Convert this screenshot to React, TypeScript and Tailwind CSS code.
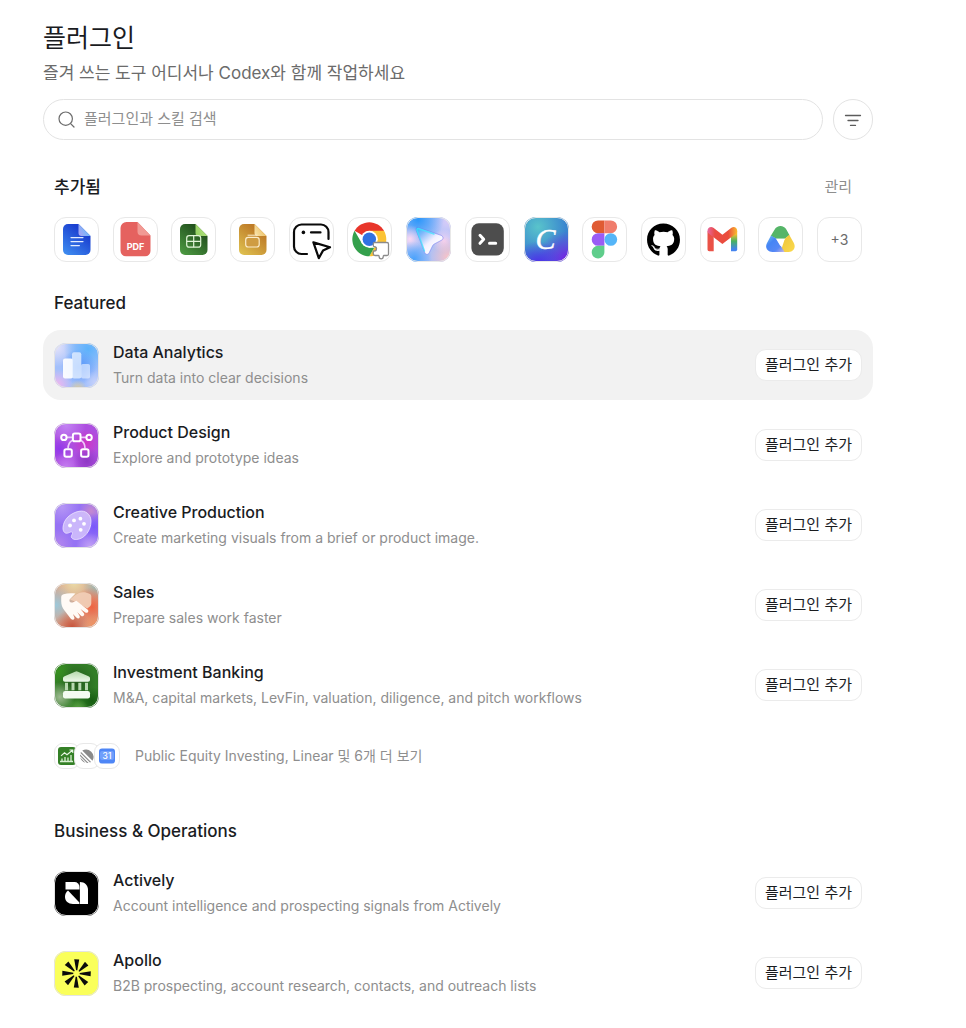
import type { ReactNode } from "react"
import { FaGithub } from "react-icons/fa"

type Blob = { x: number; y: number; r: number; color: string }

type Plugin = {
  name: string
  description: string
  icon: ReactNode
  active?: boolean
}

// Soft multi-colour background shared by the gradient app icons
function Glow({ id, base, blobs }: { id: string; base: string; blobs: Blob[] }) {
  return (
    <>
      <defs>
        {blobs.map((blob, i) => (
          <radialGradient key={i} id={`${id}-${i}`}>
            <stop offset="0" stopColor={blob.color} />
            <stop offset="1" stopColor={blob.color} stopOpacity="0" />
          </radialGradient>
        ))}
      </defs>
      <rect width="45" height="45" fill={base} />
      {blobs.map((blob, i) => (
        <circle key={i} cx={blob.x} cy={blob.y} r={blob.r} fill={`url(#${id}-${i})`} />
      ))}
    </>
  )
}

function Svg({ children }: { children: ReactNode }) {
  return (
    <svg viewBox="0 0 45 45" className="size-full" aria-hidden="true">
      {children}
    </svg>
  )
}

function FileShape({ id, from, to, foldFrom, foldTo }: Record<"id" | "from" | "to" | "foldFrom" | "foldTo", string>) {
  return (
    <>
      <defs>
        <linearGradient id={`${id}-body`} x1="0.8" y1="0" x2="0.1" y2="1">
          <stop offset="0.2" stopColor={from} />
          <stop offset="1" stopColor={to} />
        </linearGradient>
        <linearGradient id={`${id}-fold`} x1="1" y1="0.3" x2="0" y2="0.8">
          <stop offset="0" stopColor={foldFrom} />
          <stop offset="1" stopColor={foldTo} />
        </linearGradient>
      </defs>
      <path d="M14 7H24.5L36.5 19V33a5 5 0 0 1-5 5H14a5 5 0 0 1-5-5V12a5 5 0 0 1 5-5Z" fill={`url(#${id}-body)`} />
      <path d="M24.5 7 36.5 19H27.5a3 3 0 0 1-3-3Z" fill={`url(#${id}-fold)`} />
    </>
  )
}

const DocsIcon = () => (
  <Svg>
    <FileShape id="docs" from="#1a3fd0" to="#3f8df0" foldFrom="#5cc0f8" foldTo="#a7a4f5" />
    <path d="M17 20.6h12M17 24.6h12M17 28.6h8.4" stroke="#e3edff" strokeWidth="1.2" strokeLinecap="round" />
  </Svg>
)

const PdfIcon = () => (
  <Svg>
    <path d="M13.5 5H24.5L37.5 18.5V34a5.3 5.3 0 0 1-5.3 5.3H13a5.5 5.5 0 0 1-5.5-5.5V11a6 6 0 0 1 6-6Z" fill="#e5625f" />
    <path d="M24.5 5 37.5 18.5H28.5a4 4 0 0 1-4-4Z" fill="#f19a94" />
    <text x="22.5" y="33" fontSize="9" fontWeight="700" fill="#fff" textAnchor="middle">
      PDF
    </text>
  </Svg>
)

const SheetsIcon = () => (
  <Svg>
    <FileShape id="sheets" from="#24541f" to="#4d9a42" foldFrom="#b9e883" foldTo="#93cf62" />
    <rect x="15.7" y="18.7" width="14" height="11.5" rx="2.5" fill="none" stroke="#e2f5d9" strokeWidth="1.2" />
    <path d="M22.7 18.7v11.5M15.7 24.4h14" stroke="#e2f5d9" strokeWidth="1.2" />
  </Svg>
)

const SlidesIcon = () => (
  <Svg>
    <FileShape id="slides" from="#be7c28" to="#dfc150" foldFrom="#e9b956" foldTo="#f8e2a8" />
    <rect x="15.7" y="20.4" width="13.5" height="9.6" rx="2.5" fill="#cf9c42" stroke="#fbeccb" strokeWidth="1.2" />
    <path d="M18 18.2h9" stroke="#fbeccb" strokeWidth="1" strokeLinecap="round" />
  </Svg>
)

const ComputerIcon = () => (
  <Svg>
    <g fill="none" stroke="#0a0a0a" strokeWidth="2.2" strokeLinecap="round" strokeLinejoin="round">
      <path d="M39.5 22v-7A7.5 7.5 0 0 0 32 7.500H12.500A7.500 7.500 0 0 0 5 15v14.500a7.500 7.500 0 0 0 7.500 7.500H18" />
      <path d="M22 15.4h9.5" />
      <path d="M24.4 25.4 41 30.300l-7 3.300-4.200 7.500Z" />
    </g>
    <circle cx="14.4" cy="15.4" r="1.8" fill="#0a0a0a" />
  </Svg>
)

const ChromeIcon = () => (
  <Svg>
    <path d="M22.3 22.3 7.578 13.8A17 17 0 0 1 37.022 13.8Z" fill="#e8352a" />
    <path d="M22.3 13.8H37.022A17 17 0 0 1 22.3 39.3L29.661 26.55Z" fill="#fbc334" />
    <path d="M7.578 13.8 14.939 26.55 22.3 30.8H27.209L22.3 39.3A17 17 0 0 1 7.578 13.8Z" fill="#34a04c" />
    <circle cx="22.3" cy="22.3" r="8.5" fill="#fff" />
    <circle cx="22.3" cy="22.3" r="6.7" fill="#3071e2" />
    <path
      d="M28 25.5h12a1.500 1.500 0 0 1 1.500 1.500v10a1.500 1.500 0 0 1-1.500 1.500h-3c-.7 0-.8.5-.8 1.300a2 2 0 0 1-4 0c0-.8-.2-1.300-.9-1.300H28a1.700 1.700 0 0 1-1.700-1.700v-2c0-.6.4-.8 1-.8a2.200 2.200 0 0 0 0-4.400c-.6 0-1-.2-1-.8V27a1.500 1.500 0 0 1 1.700-1.500Z"
      fill="#fff"
      stroke="#8b8b8b"
      strokeWidth="1.300"
    />
  </Svg>
)

const BrowserIcon = () => (
  <Svg>
    <Glow
      id="browser"
      base="#a9c0f8"
      blobs={[
        { x: 42, y: 4, r: 20, color: "#d9ccf8" },
        { x: 12, y: 2, r: 26, color: "#2a96fa" },
        { x: 4, y: 22, r: 14, color: "#fbd9f3" },
        { x: 8, y: 42, r: 18, color: "#4aa2fb" },
        { x: 38, y: 24, r: 12, color: "#f5d3f3" },
        { x: 42, y: 40, r: 20, color: "#f8c3c8" },
      ]}
    />
    <defs>
      <linearGradient id="browser-arrow" x1="0" y1="0" x2="0.7" y2="0.8">
        <stop offset="0" stopColor="#1fb9fb" />
        <stop offset="0.3" stopColor="#7fb8fb" />
        <stop offset="0.7" stopColor="#f3f0ff" />
        <stop offset="1" stopColor="#fff" />
      </linearGradient>
    </defs>
    <path
      d="M12.500 10.500 35 18.300c2.600 1 2.700 3.800.4 5L28.300 27c-.8.4-1.300 1-1.700 1.800l-3.400 7c-1.200 2.200-3.800 2-4.600-.5L10.200 13.500c-.7-2.200.4-3.700 2.300-3Z"
      fill="url(#browser-arrow)"
      stroke="#7278ee"
      strokeOpacity="0.600"
      strokeWidth="0.900"
    />
    <path d="M18.500 34 11 13.500c-.4-1.500.2-2.300 1.500-2L28 17" fill="none" stroke="#3fe3fd" strokeWidth="1.400" strokeLinecap="round" opacity="0.750" />
  </Svg>
)

const TerminalIcon = () => (
  <Svg>
    <rect x="6.4" y="6.2" width="32.4" height="32.4" rx="7.5" fill="#4d4d4d" />
    <path d="m15 18.3 3.700 4-3.700 4M24.500 26.300h6.200" fill="none" stroke="#fff" strokeWidth="3" strokeLinecap="round" strokeLinejoin="round" />
  </Svg>
)

const CanvaIcon = () => (
  <Svg>
    <Glow
      id="canva"
      base="#3a86cf"
      blobs={[
        { x: 14, y: 10, r: 28, color: "#59c4cb" },
        { x: 42, y: 42, r: 28, color: "#7423e3" },
        { x: 14, y: 48, r: 24, color: "#5126ec" },
      ]}
    />
    <text x="21.5" y="32" fontSize="30" fontStyle="italic" fill="#fff" stroke="#fff" strokeWidth="0.4" textAnchor="middle" fontFamily="Liberation Serif, serif">
      C
    </text>
  </Svg>
)

const FigmaIcon = () => (
  <Svg>
    <path d="M22.4 3.5V16.200H16a6.350 6.350 0 0 1 0-12.700Z" fill="#e05b33" />
    <path d="M22.4 3.5h6.400a6.350 6.350 0 0 1 0 12.700h-6.400Z" fill="#f07d6c" />
    <path d="M22.4 16.2v12.600H16a6.300 6.300 0 0 1 0-12.600Z" fill="#9a5cf5" />
    <circle cx="28.8" cy="22.5" r="6.35" fill="#55b5f8" />
    <path d="M22.4 28.8v6.300A6.350 6.350 0 1 1 16 28.800Z" fill="#5fcd8b" />
  </Svg>
)

const GithubIcon = () => <FaGithub className="m-auto h-[34px] w-[33px] text-black" aria-hidden="true" />

const GmailIcon = () => (
  <Svg>
    <defs>
      <linearGradient id="gmail-right" x1="0" y1="0" x2="0" y2="1">
        <stop offset="0.15" stopColor="#f9bd2c" />
        <stop offset="0.5" stopColor="#49b35e" />
        <stop offset="0.9" stopColor="#4484ee" />
      </linearGradient>
      <linearGradient id="gmail-v" x1="0" y1="0" x2="1" y2="0">
        <stop offset="0" stopColor="#e668a2" />
        <stop offset="0.25" stopColor="#ea4c43" />
        <stop offset="0.7" stopColor="#ea4c3c" />
        <stop offset="1" stopColor="#fabd2d" />
      </linearGradient>
    </defs>
    <path d="M31 19 37.200 14V32.500a1.700 1.700 0 0 1-1.700 1.700H31Z" fill="url(#gmail-right)" />
    <path d="M7.500 14 13.700 19V34.200H9.200a1.700 1.700 0 0 1-1.700-1.700Z" fill="#ea5247" />
    <path d="M7.500 13.800c0-3.200 3.400-4.900 5.900-3l9 6.900 9-6.900c2.500-1.900 5.800-.2 5.800 3 0 1.300-.5 2.300-1.500 3L22.400 27 9 16.800c-1-.8-1.500-1.800-1.500-3Z" fill="url(#gmail-v)" />
  </Svg>
)

const DriveIcon = () => (
  <Svg>
    <defs>
      <linearGradient id="drive-blue" x1="0" y1="0" x2="1" y2="1">
        <stop offset="0" stopColor="#77c5ee" />
        <stop offset="0.35" stopColor="#4585f5" />
        <stop offset="0.7" stopColor="#5588f6" />
        <stop offset="1" stopColor="#c9b6e6" />
      </linearGradient>
      <linearGradient id="drive-yellow" x1="0" y1="0" x2="1" y2="1">
        <stop offset="0" stopColor="#ecc23b" />
        <stop offset="1" stopColor="#fbda4c" />
      </linearGradient>
    </defs>
    <path d="M16.500 12.800c2.700-5 9.300-5 12 0l3 5.500-4.800 3.500H18.500L12.700 19Z" fill="#55b568" />
    <path d="M31.200 17.800 35.800 26c2.500 4.500-.5 9-5.200 9H22.500L26.800 21.800Z" fill="url(#drive-yellow)" />
    <path d="M13 18.500 18.500 21.800 26.500 35H14.600C9.300 35 6.600 30.500 9 26Z" fill="url(#drive-blue)" />
    <path d="M18 21.800h9l-4.500 7.400Z" fill="#fff" />
  </Svg>
)

const AnalyticsIcon = () => (
  <Svg>
    <Glow
      id="analytics"
      base="#a3c0fb"
      blobs={[
        { x: 2, y: 4, r: 20, color: "#e6e3fa" },
        { x: 34, y: 6, r: 24, color: "#5cb2fb" },
        { x: 25, y: 24, r: 18, color: "#5493f9" },
        { x: 3, y: 42, r: 16, color: "#f2b7ef" },
        { x: 24, y: 46, r: 9, color: "#dccb9b" },
        { x: 42, y: 40, r: 12, color: "#c9d3fb" },
      ]}
    />
    <rect x="9" y="15.5" width="10" height="20" rx="2" fill="#fff" opacity="0.92" />
    <rect x="27" y="21" width="9" height="14.5" rx="1.8" fill="#e3edff" opacity="0.68" />
    <rect x="18" y="9.3" width="9.3" height="26.2" rx="2" fill="#e3efff" opacity="0.8" />
  </Svg>
)

const DesignIcon = () => (
  <Svg>
    <Glow
      id="design"
      base="#ad4fe0"
      blobs={[
        { x: 12, y: 2, r: 20, color: "#c283f3" },
        { x: 32, y: 20, r: 14, color: "#cf35c4" },
        { x: 5, y: 26, r: 13, color: "#9138ea" },
        { x: 12, y: 44, r: 15, color: "#c47cf0" },
        { x: 33, y: 38, r: 14, color: "#8f38c4" },
      ]}
    />
    <g fill="none" stroke="#fff" strokeWidth="2">
      <path d="M13 14.4h5.500M27 14.400h5M18.500 17.300c-3 1.500-4.400 4.500-4.400 8.300M26.800 17.300c3 1.500 4.200 4.500 4.200 8.300" stroke="#eccbfa" strokeWidth="1.700" />
      <circle cx="9.9" cy="14.4" r="2.7" />
      <circle cx="35.1" cy="14.4" r="2.7" />
      <rect x="18.9" y="10.6" width="7.6" height="7.6" rx="1.8" />
      <rect x="10.4" y="26.2" width="7.4" height="7.6" rx="1.8" />
      <rect x="27.1" y="26.2" width="7.4" height="7.6" rx="1.8" />
    </g>
  </Svg>
)

const PaletteIcon = () => (
  <Svg>
    <Glow
      id="palette"
      base="#9673f4"
      blobs={[
        { x: 8, y: 4, r: 18, color: "#b596f5" },
        { x: 37, y: 8, r: 12, color: "#c689cf" },
        { x: 40, y: 24, r: 14, color: "#7a58fa" },
        { x: 4, y: 42, r: 16, color: "#b487ee" },
        { x: 36, y: 44, r: 14, color: "#c3a2f6" },
      ]}
    />
    <path
      d="M25 8.300c6.500-1.300 12 3.200 12 10C37 27.500 30.500 36 22.500 36.500c-3.500.2-5.800-1.500-5-3.700.6-1.700 1.600-2.500.8-3.500-1-1.100-2.500.2-4.500.8-3 .8-5-1.600-4.800-5.600C9.400 16.500 16.500 10 25 8.300Z"
      fill="#d3c2fb"
      fillOpacity="0.850"
      stroke="#efe6ff"
      strokeWidth="0.800"
    />
    <g fill="#fff">
      <circle cx="20" cy="17.4" r="1.9" />
      <circle cx="26.4" cy="15.7" r="1.9" />
      <circle cx="30" cy="20.8" r="1.9" />
      <circle cx="26.7" cy="26.8" r="1.9" />
      <circle cx="16" cy="22.5" r="1.9" />
    </g>
  </Svg>
)

const SalesIcon = () => (
  <Svg>
    <Glow
      id="sales"
      base="#d9a58d"
      blobs={[
        { x: 20, y: 0, r: 20, color: "#eadba6" },
        { x: 44, y: 4, r: 15, color: "#94bdb9" },
        { x: 2, y: 22, r: 20, color: "#9cc8da" },
        { x: 38, y: 24, r: 20, color: "#ee6442" },
        { x: 18, y: 44, r: 18, color: "#c8543c" },
        { x: 40, y: 42, r: 12, color: "#ef9160" },
      ]}
    />
    <path
      d="M16 16.500 21.500 12c3-2.300 6-3.300 9.500-2.700l4.500 1.500c1.300.5 1.800 1.500 1.800 2.800v7c0 2.500-1.800 3.300-4 5L22 19Z"
      fill="#f0cdb6"
      opacity="0.950"
    />
    <path
      d="M9.500 11.200c3.500-1 7.500-1.200 12-.7L16 16c-1.500 1.800.2 4.200 2.700 3.500l3.600-1.700L33.500 26.500c2 1.700.1 4.300-2.200 3l-4.800-3.500 3.200 4c1.600 2-.8 4.300-2.700 2.700l-3.800-3.700 2.200 3.500c1.500 2.200-1 4-2.800 2.300L18.900 31l1.200 2.700c1.300 2.700-1.200 4.100-3.300 2L10.500 27.500C8 24.500 7.200 21.500 7.200 18v-3.500c0-2 .8-2.900 2.300-3.300Z"
      fill="#fffaf6"
    />
  </Svg>
)

const BankIcon = () => (
  <Svg>
    <Glow
      id="bank"
      base="#327d27"
      blobs={[
        { x: 22, y: 20, r: 20, color: "#245a1c" },
        { x: 4, y: 8, r: 14, color: "#37911f" },
        { x: 6, y: 34, r: 15, color: "#9db990" },
        { x: 38, y: 38, r: 14, color: "#155c10" },
        { x: 24, y: 47, r: 11, color: "#63a849" },
      ]}
    />
    <defs>
      <linearGradient id="bank-roof" x1="0" y1="0" x2="0" y2="1">
        <stop offset="0" stopColor="#b4d9ab" />
        <stop offset="1" stopColor="#eff9eb" />
      </linearGradient>
    </defs>
    <path d="M21 8.700a3 3 0 0 1 3 0l10.500 4.500c1 .5 1.500 1.100 1.500 2.200v1.400c0 1.200-.8 2-2 2H11c-1.200 0-2-.8-2-2v-1.400c0-1.100.5-1.700 1.500-2.200Z" fill="url(#bank-roof)" />
    <g fill="#b9d9b1">
      <rect x="11" y="19.8" width="3" height="7.5" />
      <rect x="17.5" y="19.8" width="3" height="7.5" />
      <rect x="24.3" y="19.8" width="3" height="7.5" />
      <rect x="31" y="19.8" width="3" height="7.5" />
    </g>
    <rect x="9" y="28" width="27" height="7.5" rx="2.2" fill="#f4fbf2" />
  </Svg>
)

const ActivelyIcon = () => (
  <Svg>
    <rect width="45" height="45" fill="#000" />
    <path d="M11.500 11H20.500a5 5 0 0 1 5 5v2.500H11.500Z" fill="#fff" />
    <path d="M25.900 11c5 0 8.100 3.300 8.100 8v14h-8.100Z" fill="#fff" />
    <path d="M14 19.500 25.400 31.500V33H19c-4.800 0-8-3-8-7.200 0-2.500 1-4.800 3-6.300Z" fill="#fff" />
  </Svg>
)

const ApolloIcon = () => (
  <Svg>
    <rect width="45" height="45" fill="#faff5a" />
    {[0, 45, 90, 135, 180, 225, 270, 315].map((angle) => (
      <path key={angle} d="M19.700 8.300h5l-1.500 11h-1.200Z" fill="#0b0b0b" transform={`rotate(${angle + 2} 22.500 22.500)`} />
    ))}
  </Svg>
)

const added = [
  { name: "Docs", icon: <DocsIcon /> },
  { name: "PDF", icon: <PdfIcon /> },
  { name: "Sheets", icon: <SheetsIcon /> },
  { name: "Slides", icon: <SlidesIcon /> },
  { name: "Computer", icon: <ComputerIcon /> },
  { name: "Chrome", icon: <ChromeIcon /> },
  { name: "Browser", icon: <BrowserIcon /> },
  { name: "Terminal", icon: <TerminalIcon /> },
  { name: "Canva", icon: <CanvaIcon /> },
  { name: "Figma", icon: <FigmaIcon /> },
  { name: "GitHub", icon: <GithubIcon /> },
  { name: "Gmail", icon: <GmailIcon /> },
  { name: "Google Drive", icon: <DriveIcon /> },
]

const featured: Plugin[] = [
  { name: "Data Analytics", description: "Turn data into clear decisions", icon: <AnalyticsIcon />, active: true },
  { name: "Product Design", description: "Explore and prototype ideas", icon: <DesignIcon /> },
  {
    name: "Creative Production",
    description: "Create marketing visuals from a brief or product image.",
    icon: <PaletteIcon />,
  },
  { name: "Sales", description: "Prepare sales work faster", icon: <SalesIcon /> },
  {
    name: "Investment Banking",
    description: "M&A, capital markets, LevFin, valuation, diligence, and pitch workflows",
    icon: <BankIcon />,
  },
]

const business: Plugin[] = [
  {
    name: "Actively",
    description: "Account intelligence and prospecting signals from Actively",
    icon: <ActivelyIcon />,
  },
  {
    name: "Apollo",
    description: "B2B prospecting, account research, contacts, and outreach lists",
    icon: <ApolloIcon />,
  },
]

function PluginList({ plugins }: { plugins: Plugin[] }) {
  return (
    <ul className="mt-[15px] flex flex-col gap-[10px]">
      {plugins.map((plugin) => (
        <li
          key={plugin.name}
          className={`flex items-center gap-[14px] rounded-[18px] px-[11px] py-[10px] ${plugin.active ? "bg-[#f2f2f2]" : ""}`}
        >
          <div className="size-[45px] shrink-0 overflow-hidden rounded-[12px] outline -outline-offset-1 outline-[#e4e4e4]">
            {plugin.icon}
          </div>
          <div className="min-w-0 flex-1 leading-[25px]">
            <h3 className="text-[16px] leading-[25px] font-medium text-[#1a1c1f]">{plugin.name}</h3>
            <p className="truncate text-[14px] leading-[25px] text-[#8e8e8e]">{plugin.description}</p>
          </div>
          <button
            type="button"
            aria-label={`${plugin.name} 플러그인 추가`}
            className="h-[32px] shrink-0 rounded-[11px] border border-[#ebebeb] bg-white px-[9px] text-[15px] text-[#1a1c1f]"
          >
            플러그인 추가
          </button>
        </li>
      ))}
    </ul>
  )
}

export default function App() {
  return (
    <main className="min-h-screen bg-white pt-5 pr-[93px] pb-5 pl-[43px] font-['Inter','Noto_Sans_CJK_KR',sans-serif] text-[#1a1c1f]">
      <h1 className="text-[25px] leading-[36px]">플러그인</h1>
      <p className="mt-[5px] text-[17px] leading-[24px] text-[#6b6b6b]">즐겨 쓰는 도구 어디서나 Codex와 함께 작업하세요</p>

      <div className="mt-[14px] flex gap-[10px]">
        <label className="flex h-[41px] flex-1 items-center gap-[9px] rounded-full border border-[#e3e3e3] px-[14px]">
          <svg viewBox="0 0 17 17" className="size-[17px]" fill="none" stroke="#6b6b6b" strokeWidth="1.2" strokeLinecap="round" aria-hidden="true">
            <circle cx="7.7" cy="7.7" r="6.7" />
            <path d="m12.6 12.6 3.4 3.4" />
          </svg>
          <input
            type="search"
            aria-label="플러그인과 스킬 검색"
            placeholder="플러그인과 스킬 검색"
            className="min-w-0 flex-1 bg-transparent text-[15px] outline-none placeholder:text-[#8e8e8e]"
          />
        </label>
        <button type="button" aria-label="필터" className="flex h-[41px] w-10 items-center justify-center rounded-full border border-[#e3e3e3]">
          <svg viewBox="0 0 18 12" className="h-3 w-[18px]" fill="none" stroke="#5c5c5c" strokeWidth="1.3" strokeLinecap="round" aria-hidden="true">
            <path d="M1.500 1.500h15M4 6.500h10M6.500 11.500h5" />
          </svg>
        </button>
      </div>

      <section className="mt-[35px] px-[11px]">
        <div className="flex items-center justify-between">
          <h2 className="text-[17px] leading-[24px] font-medium">추가됨</h2>
          <button type="button" className="pr-[10px] text-[15px] leading-[24px] text-[#8e8e8e]">
            관리
          </button>
        </div>
        <div className="mt-[18px] flex justify-between">
          {added.map((plugin) => (
            <button
              key={plugin.name}
              type="button"
              aria-label={plugin.name}
              className="flex size-[45px] overflow-hidden rounded-[12px] bg-white outline -outline-offset-1 outline-[#e8e8e8]"
            >
              {plugin.icon}
            </button>
          ))}
          <button type="button" className="size-[45px] rounded-[12px] text-[14px] text-[#6b6b6b] outline -outline-offset-1 outline-[#e8e8e8]">
            +3
          </button>
        </div>
      </section>

      <section className="mt-[29px]">
        <h2 className="px-[11px] text-[17px] leading-[24px] font-medium">Featured</h2>
        <PluginList plugins={featured} />
        <button type="button" className="mt-[22px] flex items-center gap-[15px] px-[11px]">
          <span className="flex">
            <span className="flex size-[26px] items-center justify-center rounded-[9px] border border-[#e8e8e8] bg-white">
              <svg viewBox="0 0 18 18" className="size-[18px]" aria-hidden="true">
                <rect width="18" height="18" rx="3" fill="#348026" />
                <path d="M2 14.5h13M4 14.500v-3M7 14.500V10M10 14.500v-4M13 14.500V8" stroke="#d9efd2" strokeWidth="1.300" />
                <path d="m3 8.8 3.500-3 2.500 2 5.500-4.500M11.500 3h3.300v3" fill="none" stroke="#e9f7e4" strokeWidth="1.100" />
              </svg>
            </span>
            <span className="-ml-[6px] flex size-[26px] items-center justify-center rounded-[9px] border border-[#e8e8e8] bg-white">
              <svg viewBox="0 0 16 16" className="size-[15px]" fill="#8a8a8a" aria-hidden="true">
                <path d="M2.400 2.700A8 8 0 0 1 13.300 13.600Z" />
                <path d="M1.100 4.200 11.800 14.900l-1.200.6L.5 5.400ZM.1 6.900l9 9-1.700.1L0 8.600ZM.2 10.200l5.600 5.600A8 8 0 0 1 .2 10.200Z" />
              </svg>
            </span>
            <span className="-ml-[6px] flex size-[26px] items-center justify-center rounded-[9px] border border-[#e8e8e8] bg-white">
              <svg viewBox="0 0 16 16" className="size-[16px]" aria-hidden="true">
                <rect y="0.5" width="16" height="15" rx="3" fill="#4e86f6" />
                <rect x="1" y="3" width="14" height="9" rx="2" fill="#6f9ffb" />
                <text x="8" y="11" fontSize="8.5" fontWeight="500" fill="#fff" textAnchor="middle">
                  31
                </text>
              </svg>
            </span>
          </span>
          <span className="text-[14px] leading-[27px] text-[#8e8e8e]">Public Equity Investing, Linear 및 6개 더 보기</span>
        </button>
      </section>

      <section className="mt-[50px]">
        <h2 className="px-[11px] text-[17px] leading-[24px] font-medium">Business &amp; Operations</h2>
        <PluginList plugins={business} />
      </section>
    </main>
  )
}
